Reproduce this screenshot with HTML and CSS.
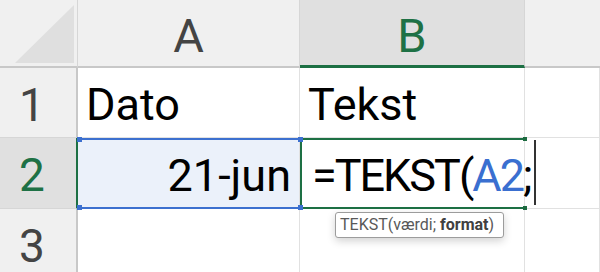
FILE: index.html
```html
<!DOCTYPE html>
<html lang="da">
<head>
    <meta charset="UTF-8">
    <meta name="viewport" content="width=device-width, initial-scale=1.0">
    <title>TEKST</title>
    <link rel="stylesheet" href="styles.css">
</head>
<body>
    <div class="sheet">
        <div class="corner">
            <svg width="78" height="66" viewBox="0 0 78 66"><polygon points="15,63 74,5 74,63" fill="#dfdfdf"/></svg>
        </div>
        <div class="col-head">A</div>
        <div class="col-head active">B</div>
        <div class="col-head last"></div>

        <div class="row-head">1</div>
        <div class="cell">Dato</div>
        <div class="cell">Tekst</div>
        <div class="cell"></div>

        <div class="row-head active">2</div>
        <div class="cell selected right">
            21-jun
            <span class="sel-box">
                <i class="handle tl"></i><i class="handle tr"></i>
                <i class="handle bl"></i><i class="handle br"></i>
            </span>
        </div>
        <div class="cell editing">
            <span class="edit-text">=TEKST(<span class="ref">A2</span>;</span><span class="caret"></span>
            <span class="edit-frame">
                <i class="handle g-tr"></i><i class="handle g-br"></i>
            </span>
            <div class="tip">TEKST(værdi; <b>format</b>)</div>
        </div>
        <div class="cell"></div>

        <div class="row-head">3</div>
        <div class="cell"></div>
        <div class="cell"></div>
        <div class="cell"></div>
    </div>
</body>
</html>
```

FILE: styles.css
```css
body {
    margin: 0;
    background: #fff;
    font-family: Roboto, "Liberation Sans", sans-serif;
    overflow: hidden;
    width: 600px;
    height: 272px;
}
.sheet {
    display: grid;
    grid-template-columns: 78px 222px 225px 1fr;
    grid-template-rows: 68px 70px 71px 70px;
}
.corner {
    background: #f0f0f0;
    border-right: 1px solid #d6d6d6;
    border-bottom: 2px solid #c8c8c8;
    box-sizing: border-box;
}
.corner svg {
    display: block;
}
.col-head {
    background: #f0f0f0;
    color: #444;
    font-size: 47px;
    display: flex;
    justify-content: center;
    align-items: center;
    padding-top: 4px;
    box-sizing: border-box;
    border-right: 1px solid #d6d6d6;
    border-bottom: 2px solid #c8c8c8;
}
.col-head.last {
    border-right: none;
}
.col-head.active {
    background: #e0e0e0;
    color: #1e7145;
    border-bottom: 3px solid #1d7044;
    padding-top: 5px;
}
.row-head {
    background: #f0f0f0;
    color: #444;
    font-size: 46px;
    display: flex;
    justify-content: center;
    align-items: center;
    padding: 4px 12px 0 0;
    box-sizing: border-box;
    border-right: 2px solid #c8c8c8;
    border-bottom: 1px solid #d6d6d6;
}
.row-head.active {
    background: #e0e0e0;
    color: #1e7145;
    border-right-color: #1d7044;
}
.cell {
    position: relative;
    font-size: 45px;
    color: #000;
    display: flex;
    align-items: flex-end;
    padding: 0 8px 6px 8px;
    box-sizing: border-box;
    white-space: nowrap;
    border-right: 1px solid #e1e1e1;
    border-bottom: 1px solid #e1e1e1;
}
.cell.right {
    justify-content: flex-end;
}
.cell.selected {
    background: #ebf1fa;
    z-index: 3;
}
.sel-box {
    position: absolute;
    top: 0;
    left: 0;
    right: -1px;
    bottom: -1px;
    border-top: 2px solid #3c70cf;
    border-bottom: 2px solid #3c70cf;
}
.handle {
    position: absolute;
    width: 5px;
    height: 5px;
    background: #3c70cf;
}
.tl { left: -1px; top: -3px; }
.tr { right: -3px; top: -3px; }
.bl { left: -1px; bottom: -3px; }
.br { right: -3px; bottom: -3px; }
.cell.editing {
    z-index: 2;
    padding-left: 12px;
    overflow: visible;
}
.edit-text {
    flex-shrink: 0;
    letter-spacing: -2px;
}
.ref {
    color: #3a6fd0;
}
.caret {
    flex-shrink: 0;
    width: 2px;
    height: 65px;
    background: #333;
    margin: 0 0 -3px 3px;
}
.edit-frame {
    position: absolute;
    top: 0;
    left: 0;
    right: -1px;
    bottom: -1px;
    border-top: 2px solid #1d7044;
    border-bottom: 2px solid #1d7044;
    border-left: 2px solid #1d7044;
}
.g-tr, .g-br {
    background: #1d6b40;
    width: 4px;
    height: 4px;
    right: -2px;
}
.g-tr { top: -3px; }
.g-br { bottom: -3px; }
.tip {
    position: absolute;
    left: 35px;
    top: 74px;
    height: 26px;
    box-sizing: border-box;
    padding: 0 9px 0 4px;
    border: 1px solid #9c9c9c;
    border-radius: 3px;
    background: #fff;
    box-shadow: 0 3px 8px rgba(0, 0, 0, 0.18);
    font-size: 16px;
    line-height: 24px;
    color: #595959;
    letter-spacing: 0;
}
.tip b {
    color: #404040;
}
```
